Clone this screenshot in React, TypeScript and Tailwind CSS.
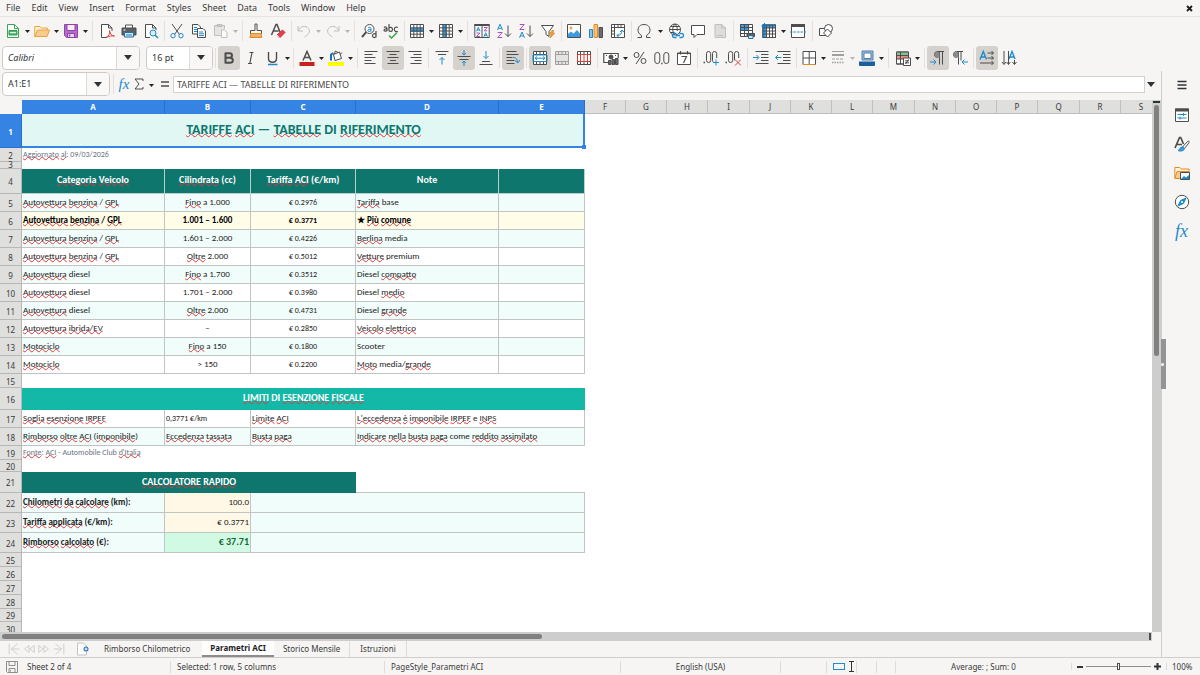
import type { ReactNode } from "react";

const K = "#4d4d4d";
const B = "#1e8bcd";

function Ic({ children, size = "size-4" }: { children: ReactNode; size?: string }) {
  return (
    <svg viewBox="0 0 16 16" fill="none" stroke={K} strokeWidth="1" className={`${size} shrink-0`} aria-hidden="true">
      {children}
    </svg>
  );
}

function T({ label, on, off, children }: { label: string; on?: boolean; off?: boolean; children: ReactNode }) {
  return (
    <button
      type="button"
      aria-label={label}
      aria-pressed={on}
      disabled={off}
      className={`flex h-6 w-[22px] shrink-0 items-center justify-center rounded-[3px] ${on ? "bg-[#d5d1cd]" : ""} ${off ? "opacity-50" : ""}`}
    >
      <Ic>{children}</Ic>
    </button>
  );
}

function Arrow({ label, w = "w-[7px]", off }: { label: string; w?: string; off?: boolean }) {
  return (
    <button type="button" aria-label={label} className={`flex h-6 shrink-0 items-center justify-center pt-0.5 ${w} ${off ? "opacity-30" : ""}`}>
      <svg viewBox="0 0 5 3" className="h-[3px] w-[5px]" fill="#222" aria-hidden="true">
        <path d="M0 0h5L2.500 3z" />
      </svg>
    </button>
  );
}

function Sep({ w = "w-[5px]" }: { w?: string }) {
  return (
    <div className={`flex shrink-0 justify-center ${w}`}>
      <div className="h-5 w-px bg-[#e2dfdc]" />
    </div>
  );
}

function Down() {
  return (
    <svg viewBox="0 0 8 5" className="h-[5px] w-2" fill="#2e3436" aria-hidden="true">
      <path d="M0 0h8L4 5z" />
    </svg>
  );
}

function Combo({ id, label, value, width, text }: { id: string; label: string; value: string; width: string; text: string }) {
  return (
    <div className={`flex h-6 shrink-0 overflow-hidden rounded-[4px] border border-[#cfcac6] bg-white ${width}`}>
      <input id={id} aria-label={label} defaultValue={value} className={`min-w-0 flex-1 bg-transparent pl-[5px] text-[#2e3436] outline-none ${text}`} />
      <button type="button" aria-label={`${label} list`} className="flex w-[23px] shrink-0 items-center justify-center border-l border-[#dedad6] bg-[#f9f8f7]">
        <Down />
      </button>
    </div>
  );
}

const gridLines = <path d="M1.500 1.500h13v13h-13zM1.500 4.800h13M1.500 8h13M1.500 11.200h13M4.800 1.500v13M8 1.500v13M11.200 1.500v13" />;

function StandardBar() {
  return (
    <div role="toolbar" aria-label="Standard" className="flex h-[27px] items-center overflow-hidden pl-0.5">
      <T label="New">
        <path d="M2.500 1.500h7l4 4v9h-11z" fill="#fff" stroke="#3aa655" />
        <path d="M9.500 1.500v4h4" stroke="#3aa655" />
        <path d="M4 7.500h8v4.500H4z" fill="#54b56c" stroke="#2f9a4b" />
        <path d="M5 9.700h6" stroke="#fff" />
      </T>
      <Arrow label="New options" />
      <T label="Open">
        <path d="M.8 13.500V3.500h5l1.500 1.500h6v2" fill="#fff3df" stroke="#e8a33d" />
        <path d="M.8 13.500 3.500 7h12l-2.500 6.500z" fill="#f9cd8c" stroke="#e8a33d" />
      </T>
      <Arrow label="Recent files" />
      <T label="Save">
        <path d="M1.500 1.500h13v13h-11l-2-2z" fill="#b56bc9" stroke="#8f45a6" />
        <path d="M4 1.500h8v6H4z" fill="#f6eef9" stroke="#8f45a6" />
        <path d="M4.500 10.500h7v4h-7z" fill="#e9d5ef" stroke="#8f45a6" />
        <path d="M6.500 11.500v2" stroke="#8f45a6" strokeWidth="1.500" />
      </T>
      <Arrow label="Save options" />
      <Sep w="w-[7px]" />
      <T label="Export as PDF">
        <path d="M13 8V5l-3.500-3.500H2.500v13h5" fill="#fff" />
        <path d="M9.500 1.500V5H13" />
        <path d="M7 14.500c3-1.500 4-4 3.500-7 1 4 2.500 5.500 5 5.500-3-.5-5.500.2-8.500 1.500z" stroke="#d8403c" />
      </T>
      <T label="Print">
        <path d="M4.500 5V2h7v3" fill="#fff" />
        <path d="M1 5h14v7H1z" fill="#5b5f63" stroke="#4d4d4d" />
        <path d="M3.500 9.500h9v4.500h-9z" fill="#cfe6f7" stroke="#2b6ea3" />
        <path d="M5 12h6" stroke={B} />
        <path d="M2.500 7h2" stroke="#fff" />
      </T>
      <T label="Print preview">
        <path d="M13 7V5L9.500 1.500h-7v13H7" fill="#fff" />
        <path d="M9.500 1.500V5H13" />
        <circle cx="10" cy="10" r="3" fill="#d9eefb" stroke={B} />
        <path d="m12 12 3 3" stroke={B} strokeWidth="1.500" />
      </T>
      <Sep w="w-1" />
      <T label="Cut">
        <path d="M3 1l7.500 10.500M13 1 5.500 11.500" />
        <circle cx="4" cy="12.700" r="2.200" stroke={B} />
        <circle cx="12" cy="12.700" r="2.200" stroke={B} />
      </T>
      <T label="Copy">
        <path d="M1.500 1.500H7L9.500 4v7h-8z" fill="#fff" />
        <path d="M6.500 5.500H12L14.500 8v6.500h-8z" fill="#fff" />
        <path d="M3 4.500h3M3 6.500h3M3 8.500h3M8 9h4M8 10.800h5M8 12.600h5" stroke={B} />
      </T>
      <T label="Paste" off>
        <path d="M8 12.500H1.500v-10h10V6" fill="#d8d6d4" stroke="#8a8a8a" />
        <path d="M4 1.500h5v2H4z" fill="#999" stroke="#8a8a8a" />
        <path d="M8.500 7h3l2.500 2.500v5H8.500z" fill="#fff" stroke="#8a8a8a" />
      </T>
      <Arrow label="Paste options" off />
      <Sep w="w-1.5" />
      <T label="Clone formatting">
        <path d="M7 1h2v6.500h4.500v3h-11v-3H7z" fill="#fff" />
        <path d="M3 10.500h10l.8 4H1.800z" fill="#f6b265" stroke="#e08a2c" />
      </T>
      <T label="Clear formatting">
        <path d="M1.500 12 6 1.500h1L10 9M3.500 8h5" strokeWidth="1.500" />
        <path d="m7 12 5.500-5 2.500 2.500L9.500 15z" fill="#e2434b" stroke="#c62f38" />
        <path d="m7 12 2.500 3" stroke="#fff" />
      </T>
      <Sep w="w-1" />
      <T label="Undo" off>
        <path d="M2 3v5h5M2.500 7.500C4 3 10 2 12.500 5.500S12 12 8.500 14" stroke="#8a8a8a" />
      </T>
      <Arrow label="Undo list" off />
      <T label="Redo" off>
        <path d="M14 3v5H9M13.500 7.500C12 3 6 2 3.500 5.500S4 12 7.500 14" stroke="#8a8a8a" />
      </T>
      <Arrow label="Redo list" off />
      <Sep w="w-[7px]" />
      <T label="Find and replace">
        <circle cx="8.500" cy="6" r="4.500" fill="#fff" />
        <path d="M5.200 9.200 1 14" strokeWidth="2" />
        <path d="M7 5c.8-1.200 3-.8 3 .5v3M10 6.300c-2-.3-3.200.2-3.200 1.200 0 1.200 2.400 1.300 3.200 0" stroke={B} />
        <path d="M15 8v6.500M15 11.500c-1-1.500-3.500-.8-3.500 1.200s2.500 2.500 3.500 1" strokeWidth="1.200" />
      </T>
      <T label="Spelling">
        <path d="M1 4.500c1-1 3-.6 3 .7v3M4 6C2 5.800 1 6.300 1 7.300S3.200 8.700 4 7.300M6 1v7.200M6 5c1-1.300 3.500-.8 3.500 1.500S7 9 6 7.500M14.800 4.500c-1.500-1-3.500-.3-3.500 1.800s2 2.900 3.500 1.900" strokeWidth="1.200" />
        <path d="m6 12.500 2.500 2.500L14 9.500" stroke="#3aa655" strokeWidth="1.500" />
      </T>
      <Sep w="w-1" />
      <T label="Row">
        <path d="M1.500 1.500h13v13h-13z" fill="#fff" stroke="none" />
        <path d="M1 5h14v4H1z" fill="#3d9be0" stroke="none" />
        {gridLines}
      </T>
      <Arrow label="Row options" />
      <T label="Column">
        <path d="M1.500 1.500h13v13h-13z" fill="#fff" stroke="none" />
        <path d="M5 1h4v14H5z" fill="#3d9be0" stroke="none" />
        {gridLines}
      </T>
      <Arrow label="Column options" />
      <Sep w="w-[7px]" />
      <T label="Sort">
        <path d="M.8 1.500h14.400v13H.8zM8 3v11.500" fill="#fff" />
        <path d="M.5 2h15" strokeWidth="2" />
        <path d="m2.500 8.300 1.800-4 1.800 4M3.200 7h2.200" stroke={B} />
        <path d="M2.500 10h3.300l-3.300 3.500h3.300M10 4.500h3.300L10 7.800h3.300" stroke="#a94fc0" />
        <path d="m10 13.700 1.700-4 1.700 4M10.700 12.400h2" stroke={B} />
      </T>
      <T label="Sort ascending">
        <path d="M1.500 7 4 1.200 6.500 7M2.300 5.300h3.400" stroke={B} />
        <path d="M1.800 9.500h4.400L1.800 14.500h4.400" stroke="#a94fc0" />
        <path d="M12 2.500v11M9 10.500l3 3 3-3" />
      </T>
      <T label="Sort descending">
        <path d="M1.800 1.500h4.400L1.800 6.500h4.400" stroke="#a94fc0" />
        <path d="M1.500 14.700 4 9l2.500 5.700M2.300 13h3.400" stroke={B} />
        <path d="M12 2.500v11M9 10.500l3 3 3-3" />
      </T>
      <T label="AutoFilter">
        <path d="M1.500 2.500h12L9 8.500v5l-3-2v-3z" fill="#fff" />
        <path d="M12 7.500 9.500 11h2L10 15l4.500-5h-2l1-2.500z" fill="#f5a343" stroke="#e28a26" />
      </T>
      <Sep w="w-1" />
      <T label="Image">
        <path d="M1.500 1.500h13v13h-13z" fill="#fff" />
        <path d="M2 14v-3l3-2.500 2.500 2L11 7l3 3.500V14z" fill="#3d9be0" stroke="none" />
        <circle cx="5" cy="5" r="1.500" fill="#f5a343" stroke="none" />
      </T>
      <T label="Chart">
        <path d="M1.500 6.500h3v8h-3z" fill="#8ac1ee" stroke={B} />
        <path d="M6 1.500h3.500v13H6z" fill="#f9c47b" stroke="#e28a26" />
        <path d="M11 4.500h3.500v10H11z" fill="#6b6b6b" />
      </T>
      <T label="Pivot table">
        <path d="M1.500 1.500h13v13h-13z" fill="#fff" />
        <path d="M1.500 4.500h13M4.500 1.500v13M8 1.500v3M11 1.500v3M1.500 8h3M1.500 11h3" />
        <path d="M7 12.500c3.500 0 5-2 5-5M9 10.500l-2 2 2 2M10 9l2-2 2 2" stroke={B} />
      </T>
      <Sep w="w-1" />
      <T label="Special character">
        <path d="M1.500 14.500h4v-2C3 11 2 9 2 7c0-3.500 2.500-5.500 6-5.500S14 3.500 14 7c0 2-1 4-3.500 5.500v2h4" />
      </T>
      <Arrow label="Special character list" w="w-2.5" />
      <T label="Hyperlink">
        <circle cx="7" cy="6.500" r="5.500" fill="#fff" />
        <path d="M1.500 6.500h11M2.500 3.500h9M2.500 9.500h4M7 1c-3 3-3 8 0 11M7 1c2.500 3 2.500 5 2.200 7" />
        <path d="M8.500 10.500h-2a2 2 0 0 0 0 4h2M11.500 10.500h2a2 2 0 0 1 0 4h-2M8 12.500h4" stroke={B} strokeWidth="1.300" />
      </T>
      <T label="Comment">
        <path d="M1.500 2.500h13v9H7l-3 3v-3H1.500z" fill="#fff" />
      </T>
      <T label="Headers and footers" off>
        <path d="M3 1.500h7l3.500 3.500v9.500H3z" fill="#c9c7c5" stroke="#8a8a8a" />
        <path d="M9.500 1.500V5h4M5 12.500h6" stroke="#8a8a8a" />
      </T>
      <Sep />
      <T label="Define print area">
        <path d="M1.500 1.500h12v12h-12z" fill="#fff" stroke="none" />
        <path d="M1 1h9v6H1z" fill="#3d9be0" stroke="none" />
        <path d="M1.500 1.500h12v12h-12zM1.500 4.500h12M1.500 7.500h12M1.500 10.500h12M5.500 1.500v12M9.500 1.500v12" />
        <path d="M8 10.500h7.500v3H8z" fill="#5b5f63" />
        <path d="M9.500 12.500h4.500v3H9.500z" fill="#cfe6f7" stroke="#2b6ea3" />
      </T>
      <T label="Freeze rows and columns">
        <path d="M2 2h12.500v12.500H2z" fill="#fff" />
        <path d="M1 1h14v4H5v10H1z" fill="#3d9be0" stroke="none" />
        <path d="M2 5h12.500M2 8h12.500M2 11h12.500M5.500 2v12.500M8.500 2v12.500M11.500 2v12.500M2 2h12.500v12.500H2z" />
        <path d="M3.500 0v6M.5 3h6" stroke="#1672b8" />
      </T>
      <Arrow label="Freeze options" />
      <T label="Split window">
        <path d="M1.500 2.500h13v12h-13z" fill="#fff" />
        <path d="M1 2.500h14" strokeWidth="3" />
        <path d="M0 9h16" stroke={B} strokeDasharray="2.500 1" />
      </T>
      <Sep w="w-1.5" />
      <T label="Show draw functions">
        <path d="M1.500 5.500h7v7h-7z" fill="#fff" />
        <circle cx="10.500" cy="5.500" r="4" fill="#fff" />
        <path d="m9.500 6 4 4-4 4-4-4z" fill="#fff" />
      </T>
    </div>
  );
}

function FormattingBar() {
  return (
    <div role="toolbar" aria-label="Formatting" className="flex h-[27px] items-center overflow-hidden pl-0.5">
      <Combo id="font-name" label="Font name" value="Calibri" width="mr-1.5 w-[138px]" text="text-[9px] italic" />
      <Combo id="font-size" label="Font size" value="16 pt" width="w-[67px]" text="text-[9px]" />
      <Sep />
      <T label="Bold" on>
        <path d="M4.500 2.500v11M4.500 3.200h4c3.300 0 3.300 4.500 0 4.500h-4M4.500 7.700H9c3.800 0 3.800 5.100 0 5.100H4.500" strokeWidth="2" />
      </T>
      <T label="Italic">
        <path d="M6.500 2.500h4M5 13.500h4M9 2.500 6.800 13.500" strokeWidth="1.200" />
      </T>
      <T label="Underline">
        <path d="M3.500 2v6.500c0 5 8 5 8 0V2" strokeWidth="1.400" />
        <path d="M3 14.500h9.500" stroke={B} strokeWidth="1.500" />
      </T>
      <Arrow label="Underline styles" />
      <Sep />
      <T label="Font color">
        <path d="m4 10.500 4-9 4 9M5.300 7.500h5.400" strokeWidth="1.500" />
        <path d="M.5 12h15v4H.5z" fill="#c9211e" stroke="none" />
      </T>
      <Arrow label="Font color list" />
      <T label="Highlighting">
        <path d="m5.500 4.500 6-2.500 2 6.500-6.500 2z" fill="#fff" />
        <path d="M3 10.500V4.500L5.500 3" stroke="#1672b8" strokeWidth="2" />
        <path d="m6.500 4 .8-3 2.700 1.500M12 4.500l2-2" />
        <path d="M0 12h16v4H0z" fill="#ffff00" stroke="none" />
      </T>
      <Arrow label="Highlighting list" />
      <Sep w="w-1.5" />
      <T label="Align left">
        <path d="M1.500 1.500h13M1.500 4.500h8M1.500 7.500h11M1.500 10.500h7M1.500 13.500h11" />
      </T>
      <T label="Align center" on>
        <path d="M1.500 1.500h13M4.500 4.500h7M2.500 7.500h11M5 10.500h6M2.500 13.500h11" />
      </T>
      <T label="Align right">
        <path d="M1.500 1.500h13M6.500 4.500h8M3.500 7.500h11M7.500 10.500h7M3.500 13.500h11" />
      </T>
      <Sep />
      <T label="Align top">
        <path d="M1.500 1.500h13M4 4.500h8" />
        <path d="M8 14.500v-7M5.500 10 8 7.500l2.500 2.500" stroke={B} />
      </T>
      <T label="Center vertically" on>
        <path d="M1.500 6.500h13M3.500 9.500h9" />
        <path d="M8 0v5M6 3l2 2 2-2M8 16v-5M6 13l2-2 2 2" stroke={B} />
      </T>
      <T label="Align bottom">
        <path d="M4 11.500h8M1.500 14.500h13" />
        <path d="M8 1v7.500M5.500 6 8 8.500 10.500 6" stroke={B} />
      </T>
      <Sep />
      <T label="Wrap text" on>
        <path d="M1.500 1.500h10M1.500 4.500h12M1.500 7.500h6M1.500 10.500h8M1.500 13.500h8" />
        <path d="M8 7.500c3 0 4 1 4.500 4.500M10 10.500l2.700 2.500L15 10" stroke={B} />
      </T>
      <Sep />
      <T label="Merge and center" on>
        <path d="M1.500 1.500h13v13h-13z" fill="#fff" />
        <path d="M1.500 4.500h13M1.500 11.500h13M4.500 1.500v3M8 1.500v3M11.500 1.500v3M4.500 11.500v3M8 11.500v3M11.500 11.500v3" />
        <path d="M1 5h14v6.500H1zM3 8.200h10M5 6.500 3 8.200 5 10M11 6.500l2 1.700L11 10" stroke={B} />
      </T>
      <T label="Merge cells" off>
        <path d="M1.500 1.500h13v13h-13z" fill="#d5d3d1" />
        <path d="M1.500 4.500h13M1.500 11.500h13M4.500 1.500v3M8 1.500v3M11.500 1.500v3M4.500 11.500v3M8 11.500v3M11.500 11.500v3" />
      </T>
      <T label="Unmerge cells">
        <path d="M1.500 1.500h13v13h-13z" fill="#fff" />
        <path d="M4.500 1.500v3M8 1.500v3M11.500 1.500v3M4.500 11.500v3M8 11.500v3M11.500 11.500v3" />
        <path d="M1.500 4.500h13v7h-13zM4.500 4.500v7M8 4.500v7M11.500 4.500v7" stroke="#d8403c" />
      </T>
      <Sep />
      <T label="Format as currency">
        <path d="M6 12.500H.8v-9h14.400V8" fill="#fff" strokeWidth="1.200" />
        <circle cx="8" cy="7" r="2" fill={K} />
        <path d="M3 5.500h1M12 5.500h1" />
        <path d="M5.500 10.500h2.500v4H5.500zM9 9.500h2.500v5H9zM12.500 8.500h2.500v6h-2.500z" fill="#6b6b6b" stroke="#4d4d4d" />
      </T>
      <Arrow label="Currency list" />
      <T label="Format as percent">
        <circle cx="4.500" cy="5" r="2.500" />
        <circle cx="11.500" cy="11" r="2.500" />
        <path d="M12 2 4 14" />
      </T>
      <T label="Format as number">
        <rect x=".8" y="2.500" width="5" height="11" rx="2.500" />
        <rect x="9.800" y="2.500" width="5" height="11" rx="2.500" />
        <path d="M7.200 13.500h1.300" strokeWidth="1.500" />
      </T>
      <T label="Format as date">
        <path d="M1.500 3h13v11.500h-13z" fill="#fff" />
        <path d="M1.500 3.500h13M4.500 1v3.500M11.500 1v3.500M5.500 6.500h5L7.500 13" strokeWidth="1.200" />
      </T>
      <Sep />
      <T label="Add decimal place">
        <path d="M.5 12.500h1.500" strokeWidth="1.500" />
        <rect x="3.500" y="1.500" width="4.200" height="11" rx="2.100" />
        <path d="M13.700 8V3.600a2.100 2.100 0 0 0-4.200 0v6.800c0 1 .5 1.600 1 1.900" />
        <path d="M13 9.500v6M10 12.500h6" stroke={B} />
      </T>
      <T label="Delete decimal place">
        <path d="M.5 12.500h1.500" strokeWidth="1.500" />
        <rect x="3.500" y="1.500" width="4.200" height="11" rx="2.100" />
        <path d="M13.700 8V3.600a2.100 2.100 0 0 0-4.200 0v6.800" />
        <path d="m10 9.500 6 6M16 9.500l-6 6" stroke="#d8403c" />
      </T>
      <Sep w="w-1.5" />
      <T label="Increase indent">
        <path d="M2.500 1.500h13M8 4.500h7.500M8 7.500h7.500M8 10.500h7.500M2.500 13.500h13" />
        <path d="M0 7.500h5.500M3.500 5l2.500 2.500L3.500 10" stroke={B} />
      </T>
      <T label="Decrease indent">
        <path d="M2.500 1.500h13M8 4.500h7.500M8 7.500h7.500M8 10.500h7.500M2.500 13.500h13" />
        <path d="M.5 7.500h6M3 5 .5 7.500 3 10" stroke={B} />
      </T>
      <Sep w="w-1" />
      <T label="Borders">
        <path d="M2 1.500h12.500v13H2zM8.200 1.500v13M2 8h12.500" fill="#fff" />
        <path d="M2 14.500h12.500" stroke="#e28a26" />
      </T>
      <Arrow label="Borders list" />
      <T label="Border style" off>
        <path d="M2 1.500h12M2 5.500h12M2 4.500h12" />
        <path d="M2 9h12" strokeDasharray="3 1" />
        <path d="M2 12.500h12" strokeWidth="1.500" strokeDasharray="1.500 1" />
      </T>
      <Arrow label="Border style list" off />
      <T label="Border color">
        <path d="M3 1h11v9H3z" fill="#8ac1ee" stroke="#5b7fa0" />
        <path d="M5 3h7v5.500H5z" fill="#fff" stroke="#5b7fa0" />
        <path d="M0 11.500h16V15a1 1 0 0 1-1 1H1a1 1 0 0 1-1-1z" fill="#1c5f9e" stroke="none" />
      </T>
      <Arrow label="Border color list" />
      <Sep w="w-[7px]" />
      <T label="Conditional formatting">
        <path d="M1.500 2h12v12h-12z" fill="#fff" />
        <path d="M2 2.500h11v3H2z" fill="#7fc491" stroke="none" />
        <path d="M2 6h11v3H2z" fill="#e78f86" stroke="none" />
        <path d="M1.500 2h12v12h-12zM1.500 5.500h12M1.500 9h12M5.500 2v12" />
        <path d="M8.500 8h7v7.500h-7zM10 10.800h4M10 12.800h4M13.500 9.500l-3 4.500" fill="#fff" />
      </T>
      <Arrow label="Conditional formatting list" />
      <Sep w="w-1.5" />
      <T label="Left-to-right" on>
        <path d="M7.500 7.500a3 3 0 0 1 0-6H14M9.500 1.500v13M12.500 1.500v13" />
        <path d="M7.500 2H9.500v5.500h-2a2.750 2.750 0 0 1 0-5.500z" fill="#8a8a8a" stroke="none" />
        <path d="M0 12h6M3.500 9.500 6 12l-2.500 2.500" stroke={B} />
      </T>
      <T label="Right-to-left">
        <path d="M4.500 7.500a3 3 0 0 1 0-6H11M6.500 1.500v13M9 1.500v9" />
        <path d="M4.500 2H6.500v5.500h-2a2.750 2.750 0 0 1 0-5.500z" fill="#8a8a8a" stroke="none" />
        <path d="M16 12h-6M12.500 9.500 10 12l2.500 2.500" stroke={B} />
      </T>
      <Sep />
      <T label="Text direction left to right" on>
        <path d="M1 9.500 4.300 1.500 7.500 9.500M2.200 7h4.200" stroke={B} strokeWidth="1.400" />
        <path d="M8.500 3h6M12.500 1l2 2-2 2M8.500 8h6M12.500 6l2 2-2 2M1 13h13.500M12.500 11l2 2-2 2" />
      </T>
      <T label="Text direction top to bottom">
        <path d="m8 9 3-7.500L14 9M9 7h4" stroke={B} strokeWidth="1.400" />
        <path d="M3 1v13M1 12l2 2.500L5 12M7.500 1v13M5.700 12l1.800 2.500L9.300 12M13.500 10v4M11.500 12l2 2.500 2-2.500" />
      </T>
    </div>
  );
}

function FormulaBar() {
  return (
    <div className="flex h-[26px] items-center pr-1 pl-0.5">
      <Combo id="name-box" label="Name box" value="A1:E1" width="w-[108px]" text="text-[9px]" />
      <div className="ml-[3px] h-5 w-px bg-[#e2dfdc]" />
      <button type="button" aria-label="Function wizard" className="ml-px w-[18px] text-center font-['Liberation_Serif',serif] text-[15px] leading-4 text-[#1e8bcd] italic">
        fx
      </button>
      <button type="button" aria-label="Select function" className="flex w-3 justify-center">
        <svg viewBox="0 0 10 12" fill="none" stroke="#4d4d4d" className="h-3 w-2.5" aria-hidden="true">
          <path d="M9 3V1H1l4 5-4 5h8V9" />
        </svg>
      </button>
      <Arrow label="Function list" w="w-3" />
      <button type="button" aria-label="Formula" className="flex w-[15px] justify-center">
        <svg viewBox="0 0 8 6" stroke="#4d4d4d" strokeWidth="1.500" className="h-1.5 w-2" aria-hidden="true">
          <path d="M0 1h8M0 5h8" />
        </svg>
      </button>
      <input
        aria-label="Formula input"
        defaultValue="TARIFFE ACI — TABELLE DI RIFERIMENTO"
        className="ml-px h-[17px] min-w-0 flex-1 border border-[#d5d1cd] bg-white pl-[3px] text-[9px] text-[#4a4a4a] outline-none"
      />
      <button type="button" aria-label="Expand formula bar" className="flex w-3 justify-center">
        <Down />
      </button>
    </div>
  );
}

function Marked({ text }: { text: string }) {
  return (
    <>
      {text.split("_").map((part, i) =>
        i % 2 ? (
          <span key={i} className="underline decoration-[#e0383c] decoration-wavy decoration-1 underline-offset-[-1px] [text-decoration-skip-ink:none]">
            {part}
          </span>
        ) : (
          part
        ),
      )}
    </>
  );
}

type Cell = { t?: string; span?: number; c: string };
type Row = { n: number; h: string; cells: Cell[] };

const line = "border-r border-b border-[#c0c5c4]";
const mint = `${line} bg-[#f0fdfa]`;
const white = `${line} bg-white`;
const cream = `${line} bg-[#fffde7] font-bold text-black`;
const head = "border-r border-b border-[#b9cfcc] bg-[#0f766e] text-center text-[10px] font-bold text-white";
const blank = "bg-white";

const rates: [string, string, string, string][] = [
  ["_Autovettura_ _benzina_ / _GPL_", "_Fino_ a 1.000", "€ 0.2976", "_Tariffa_ base"],
  ["_Autovettura_ _benzina_ / _GPL_", "1.001 – 1.600", "€ 0.3771", "★ _Più_ _comune_"],
  ["_Autovettura_ _benzina_ / _GPL_", "1.601 – 2.000", "€ 0.4226", "_Berlina_ media"],
  ["_Autovettura_ _benzina_ / _GPL_", "_Oltre_ 2.000", "€ 0.5012", "_Vetture_ premium"],
  ["_Autovettura_ diesel", "_Fino_ a 1.700", "€ 0.3512", "Diesel _compatto_"],
  ["_Autovettura_ diesel", "1.701 – 2.000", "€ 0.3980", "Diesel _medio_"],
  ["_Autovettura_ diesel", "_Oltre_ 2.000", "€ 0.4731", "Diesel _grande_"],
  ["_Autovettura_ _ibrida/EV_", "–", "€ 0.2850", "_Veicolo_ _elettrico_"],
  ["_Motociclo_", "_Fino_ a 150", "€ 0.1800", "Scooter"],
  ["_Motociclo_", "> 150", "€ 0.2200", "_Moto_ media/_grande_"],
];

const rows: Row[] = [
  { n: 1, h: "h-[34px]", cells: [{ t: "_TARIFFE_ _ACI_ — _TABELLE_ DI _RIFERIMENTO_", span: 5, c: "relative bg-[#e0f7f4] text-center text-[14px] font-bold text-[#0f766e]" }] },
  { n: 2, h: "h-[14px]", cells: [{ t: "_Aggiornato_ _al_: 09/03/2026", span: 5, c: "bg-white text-[8px] text-[#6b7280]" }] },
  { n: 3, h: "h-[7px]", cells: [{ span: 5, c: blank }] },
  {
    n: 4,
    h: "h-[25px]",
    cells: [
      { t: "_Categoria_ _Veicolo_", c: head },
      { t: "_Cilindrata_ (cc)", c: head },
      { t: "_Tariffa_ _ACI_ (€/km)", c: head },
      { t: "Note", c: head },
      { c: head },
    ],
  },
  ...rates.map((r, i): Row => {
    const s = i === 1 ? cream : i % 2 ? white : mint;
    return {
      n: 5 + i,
      h: "h-[18px]",
      cells: [{ t: r[0], c: s }, { t: r[1], c: `${s} text-center` }, { t: r[2], c: `${s} text-center text-[8px]` }, { t: r[3], c: s }, { c: s }],
    };
  }),
  { n: 15, h: "h-[14px]", cells: [{ span: 5, c: blank }] },
  { n: 16, h: "h-[22px]", cells: [{ t: "_LIMITI_ DI _ESENZIONE_ _FISCALE_", span: 5, c: "bg-[#14b8a6] text-center text-[10px] font-bold text-white" }] },
  {
    n: 17,
    h: "h-[18px]",
    cells: [
      { t: "_Soglia_ _esenzione_ _IRPEF_", c: white },
      { t: "0,3771 €/km", c: `${white} text-[8px]` },
      { t: "_Limite_ _ACI_", c: white },
      { t: "_L'eccedenza_ _è_ _imponibile_ _IRPEF_ e _INPS_", span: 2, c: white },
    ],
  },
  {
    n: 18,
    h: "h-[18px]",
    cells: [
      { t: "_Rimborso_ _oltre_ _ACI_ (_imponibile_)", c: mint },
      { t: "_Eccedenza_ _tassata_", c: mint },
      { t: "_Busta_ _paga_", c: mint },
      { t: "_Indicare_ _nella_ _busta_ _paga_ come _reddito_ _assimilato_", span: 2, c: mint },
    ],
  },
  { n: 19, h: "h-[14px]", cells: [{ t: "_Fonte_: _ACI_ - Automobile Club _d'Italia_", span: 5, c: "bg-white text-[8px] text-[#6b7280]" }] },
  { n: 20, h: "h-[12px]", cells: [{ span: 5, c: blank }] },
  { n: 21, h: "h-[21px]", cells: [{ t: "_CALCOLATORE_ _RAPIDO_", span: 3, c: "bg-[#0f766e] text-center text-[10px] font-bold text-white" }, { span: 2, c: "border-b border-[#c0c5c4] bg-white" }] },
  { n: 22, h: "h-[20px]", cells: [{ t: "_Chilometri_ _da_ _calcolare_ (km):", c: `${mint} font-bold` }, { t: "100.0", c: `${line} bg-[#fff8e7] text-right` }, { span: 3, c: mint }] },
  { n: 23, h: "h-[20px]", cells: [{ t: "_Tariffa_ _applicata_ (€/km):", c: `${mint} font-bold` }, { t: "€ 0.3771", c: `${line} bg-[#fff8e7] text-right` }, { span: 3, c: mint }] },
  { n: 24, h: "h-[20px]", cells: [{ t: "_Rimborso_ _calcolato_ (€):", c: `${mint} font-bold` }, { t: "€ 37.71", c: `${line} bg-[#d1fae5] text-right text-[10px] font-bold text-[#166534]` }, { span: 3, c: mint }] },
  ...[25, 26, 27, 28, 29, 30].map((n): Row => ({ n, h: "h-[14px]", cells: [{ span: 5, c: blank }] })),
];

const columns: [string, string][] = [
  ["A", "w-[143px]"], ["B", "w-[86px]"], ["C", "w-[105px]"], ["D", "w-[143px]"], ["E", "w-[86px]"],
  ["F", "w-[41px]"], ["G", "w-[41px]"], ["H", "w-[41px]"], ["I", "w-[42px]"], ["J", "w-[41px]"], ["K", "w-[41px]"], ["L", "w-[41px]"],
  ["M", "w-[42px]"], ["N", "w-[41px]"], ["O", "w-[41px]"], ["P", "w-[41px]"], ["Q", "w-[42px]"], ["R", "w-[41px]"], ["S", "w-[41px]"],
];

function Sheet() {
  return (
    <div className="min-w-0 flex-1 overflow-hidden bg-white">
      <table className="w-px table-fixed border-separate border-spacing-0 text-[9px] leading-none text-[#1c1c1c]">
        <colgroup>
          <col className="w-[22px]" />
          {columns.map(([name, w]) => (
            <col key={name} className={w} />
          ))}
        </colgroup>
        <thead>
          <tr className="h-[14px] font-['Noto_Sans',sans-serif] text-[8px]">
            <th aria-label="Select all" className="bg-[#f6f5f4] p-0" />
            {columns.map(([name], i) => (
              <th
                key={name}
                scope="col"
                className={`border-r p-0 ${i < 5 ? "border-[#2a6fc9] bg-[#3584e4] font-bold text-white" : "border-b border-[#c0bfbd] bg-[#dfdfde] font-normal text-[#3a3a3a]"}`}
              >
                {name}
              </th>
            ))}
          </tr>
        </thead>
        <tbody className="font-[Carlito,Lato,sans-serif]">
          {rows.map((row) => (
            <tr key={row.n} className={row.n === 29 ? "h-[13px]" : row.h}>
              <th
                scope="row"
                className={`border-r border-b p-0 font-['Noto_Sans',sans-serif] text-[8px] ${row.n === 1 ? "border-[#2a6fc9] bg-[#3584e4] font-bold text-white" : "border-[#b8b7b5] bg-[#dfdfde] font-normal text-[#3a3a3a]"}`}
              >
                <div className={row.n === 3 ? "leading-[6px]" : "pt-0.5"}>{row.n}</div>
              </th>
              {row.cells.map((cell, i) => (
                <td key={i} colSpan={cell.span ?? 1} className={`px-px pt-0 pb-0.5 whitespace-nowrap ${cell.c}`}>
                  {cell.t ? <Marked text={cell.t} /> : null}
                  {row.n === 1 ? (
                    <div className="absolute inset-0 border-r-2 border-b-2 border-[#3584e4]">
                      <div className="absolute -right-[3px] -bottom-[3px] size-1 bg-[#3584e4]" />
                    </div>
                  ) : null}
                </td>
              ))}
            </tr>
          ))}
        </tbody>
      </table>
    </div>
  );
}

function SideBar() {
  return (
    <aside aria-label="Sidebar" className="relative flex w-[39px] shrink-0 flex-col items-center border-l border-[#d0cecc] bg-[#f6f5f4] pt-[3px] pl-px">
      <button type="button" aria-label="Sidebar settings" className="mb-1 flex h-[22px] w-7 items-center justify-center">
        <Ic>
          <path d="M3.500 4.500h9M3.500 8h9M3.500 11.500h9" stroke="#2e3436" strokeWidth="1.500" />
        </Ic>
      </button>
      <button type="button" aria-label="Properties" className="flex h-[29px] w-7 items-center justify-center">
        <Ic>
          <path d="M1.500 2h13v12.500h-13z" fill="#fff" />
          <path d="M1 3h14" strokeWidth="3" />
          <path d="M3.500 7.500h9M3.500 11h9M9.500 6v3M6 9.500v3" stroke={B} />
        </Ic>
      </button>
      <button type="button" aria-label="Styles" className="flex h-[29px] w-7 items-center justify-center">
        <Ic>
          <path d="M1 12 5.500 1.500h1.200L9.500 8M2.800 8.500H8" strokeWidth="1.700" />
          <path d="m8.500 11 5-5.500c1-1 2.300 0 1.500 1.200L10.500 12.500z" fill="#fff" />
          <path d="M4 14.500c2 0 1.500-3.500 4-3.500s3 2.500 1 3.500-3.500.5-5 0z" fill="#3d9be0" stroke={B} />
        </Ic>
      </button>
      <button type="button" aria-label="Gallery" className="flex h-[29px] w-7 items-center justify-center">
        <Ic>
          <path d="M.8 13V2.500h5L7.300 4H15v3" fill="#fff3df" stroke="#e28a26" />
          <path d="M.8 13.500 3 6.500h12v7z" fill="#f9cd8c" stroke="#e28a26" />
          <path d="M6.500 7.500h9v7h-9z" fill="#fff" />
          <path d="m7 14 3-3 2 1.500 3-2.500v4z" fill="#1e8bcd" stroke="none" />
        </Ic>
      </button>
      <button type="button" aria-label="Navigator" className="flex h-[29px] w-7 items-center justify-center">
        <Ic>
          <circle cx="8" cy="8" r="6.700" fill="#fff" />
          <path d="M12 4 9.500 9.500 4 12l2.500-5.500z" fill="#1e8bcd" stroke={B} />
          <circle cx="8" cy="8" r="1" fill="#fff" stroke="none" />
        </Ic>
      </button>
      <button type="button" aria-label="Functions" className="h-[29px] w-7 text-center font-['Liberation_Serif',serif] text-[18px] leading-none text-[#1e8bcd] italic">
        fx
      </button>
      <button type="button" aria-label="Hide sidebar" className="absolute top-[268px] -left-px flex h-[50px] w-[5px] items-center bg-[#949494]">
        <span className="size-[3px] rounded-full bg-white" />
      </button>
    </aside>
  );
}

function SheetTabs() {
  return (
    <nav aria-label="Sheets" className="flex h-4 items-stretch pl-1.5 text-[8px] text-[#3a3a3a]">
      {["M2.500 2v12M12 2 5 8l7 6M5 8h9", "M8 4 3 8l5 4zM14 4 9 8l5 4z", "M2 4l5 4-5 4zM8 4l5 4-5 4z", "M13.500 2v12M4 2l7 6-7 6M2 8h9"].map((d, i) => (
        <button key={d} type="button" disabled aria-label={["First sheet", "Previous sheet", "Next sheet", "Last sheet"][i]} className="flex w-[15px] items-center justify-center">
          <svg viewBox="0 0 16 16" fill="none" stroke="#cbc9c7" className="size-3.5" aria-hidden="true">
            <path d={d} />
          </svg>
        </button>
      ))}
      <button type="button" aria-label="Add sheet" className="ml-2 flex w-[15px] items-center justify-center">
        <svg viewBox="0 0 14 14" fill="none" className="size-3.5" aria-hidden="true">
          <path d="M2.500 1h6l3 3v9h-9z" fill="#fff" stroke="#c5c3c1" />
          <circle cx="11" cy="7" r="2.500" fill="#2f6fc0" />
          <path d="M11 5.500v3M9.500 7h3" stroke="#fff" />
        </svg>
      </button>
      <button type="button" className="ml-[3px] px-3">Rimborso Chilometrico</button>
      <button type="button" aria-current="page" className="border-b-2 border-[#8e8c8a] bg-white px-2 font-bold text-[#1c1c1c]">
        Parametri ACI
      </button>
      <button type="button" className="border-r border-[#dedcda] px-[9px]">Storico Mensile</button>
      <button type="button" className="border-r border-[#dedcda] px-[10px]">Istruzioni</button>
    </nav>
  );
}

function StatusBar() {
  return (
    <footer className="flex h-[18px] shrink-0 items-center border-t border-[#d0cecc] text-[8px] text-[#3a3a3a]">
      <span className="flex w-6 justify-center">
        <svg viewBox="0 0 12 12" fill="none" stroke="#8f8d8b" className="size-3" aria-label="Document saved">
          <path d="M.5.500h11v11h-10l-1-1zM3 .5v4h6v-4M3 11.500v-4h6v4M4.500 9v1.500" />
        </svg>
      </span>
      <span className="w-[146px] pl-[3px]">Sheet 2 of 4</span>
      <span className="w-[214px] border-l border-[#dedcda] pl-1.5">Selected: 1 row, 5 columns</span>
      <span className="w-[236px] border-l border-[#dedcda] pl-1.5">PageStyle_Parametri ACI</span>
      <span className="flex-1 border-l border-[#dedcda] text-center">English (USA)</span>
      <span className="h-3 w-[46px] border-l border-[#dedcda]" />
      <span className="flex h-3 w-[30px] items-center gap-1 border-l border-[#dedcda] pl-1.5">
        <span className="h-[7px] w-3 border border-[#1e8bcd]" />
        <svg viewBox="0 0 5 11" fill="none" stroke="#2e3436" className="h-[11px] w-[5px]" aria-hidden="true">
          <path d="M0 .5h5M0 10.500h5M2.500.500v10" />
        </svg>
      </span>
      <span className="h-3 w-5 border-l border-[#dedcda]" />
      <span className="h-3 w-5 border-x border-[#dedcda]" />
      <span className="w-[175px] text-center">Average: ; Sum: 0</span>
      <span className="flex w-24 items-center justify-between border-x border-[#dedcda] px-[5px]">
        <button type="button" aria-label="Zoom out" className="h-0.5 w-1.5 bg-[#2e3436]" />
        <input
          type="range"
          aria-label="Zoom"
          min={0}
          max={100}
          defaultValue={50}
          className="h-px w-[65px] appearance-none bg-[#8f8d8b] [&::-webkit-slider-thumb]:h-[7px] [&::-webkit-slider-thumb]:w-[3px] [&::-webkit-slider-thumb]:appearance-none [&::-webkit-slider-thumb]:border [&::-webkit-slider-thumb]:border-[#4d4d4d] [&::-webkit-slider-thumb]:bg-[#f6f5f4]"
        />
        <button type="button" aria-label="Zoom in" className="flex">
          <svg viewBox="0 0 7 7" stroke="#2e3436" strokeWidth="2" className="size-[7px]" aria-hidden="true">
            <path d="M3.500 0v7M0 3.500h7" />
          </svg>
        </button>
      </span>
      <span className="w-[33px] pl-[5px]">100%</span>
    </footer>
  );
}

export default function App() {
  return (
    <div className="flex h-screen flex-col overflow-hidden bg-[#f6f5f4] font-['Noto_Sans',sans-serif] text-[#3a3a3a]">
      <header className="flex h-[17px] shrink-0 items-center border-b border-[#e6e4e2] pr-[7px] pl-1.5 text-[9px]">
        <nav aria-label="Main menu" className="flex flex-1 gap-[11px]">
          {["File", "Edit", "View", "Insert", "Format", "Styles", "Sheet", "Data", "Tools", "Window", "Help"].map((m) => (
            <button key={m} type="button">{m}</button>
          ))}
        </nav>
        <button type="button" aria-label="Close document">
          <svg viewBox="0 0 7 7" stroke="#1c1c1c" strokeWidth="1.800" className="size-[7px]" aria-hidden="true">
            <path d="m1 1 5 5M6 1 1 6" />
          </svg>
        </button>
      </header>
      <StandardBar />
      <FormattingBar />
      <div className="flex min-h-0 flex-1">
        <main className="flex min-w-0 flex-1 flex-col">
          <FormulaBar />
          <div className="mt-[3px] flex min-h-0 flex-1">
            <Sheet />
            <div className="flex w-[9px] shrink-0 flex-col items-center bg-[#cdcdcd]">
              <div className="mt-px h-0.5 w-[7px] bg-[#2e3436]" />
              <div className="mt-0.5 h-[251px] w-[5px] rounded-full bg-[#808080]" />
            </div>
          </div>
          <div className="mr-[9px] flex h-[9px] shrink-0 items-center bg-[#cdcdcd] pl-0.5">
            <div className="h-[5px] w-[540px] rounded-full bg-[#808080]" />
            <div className="mr-px ml-auto h-[7px] w-0.5 bg-[#4d4d4d]" />
          </div>
          <SheetTabs />
        </main>
        <SideBar />
      </div>
      <StatusBar />
    </div>
  );
}
